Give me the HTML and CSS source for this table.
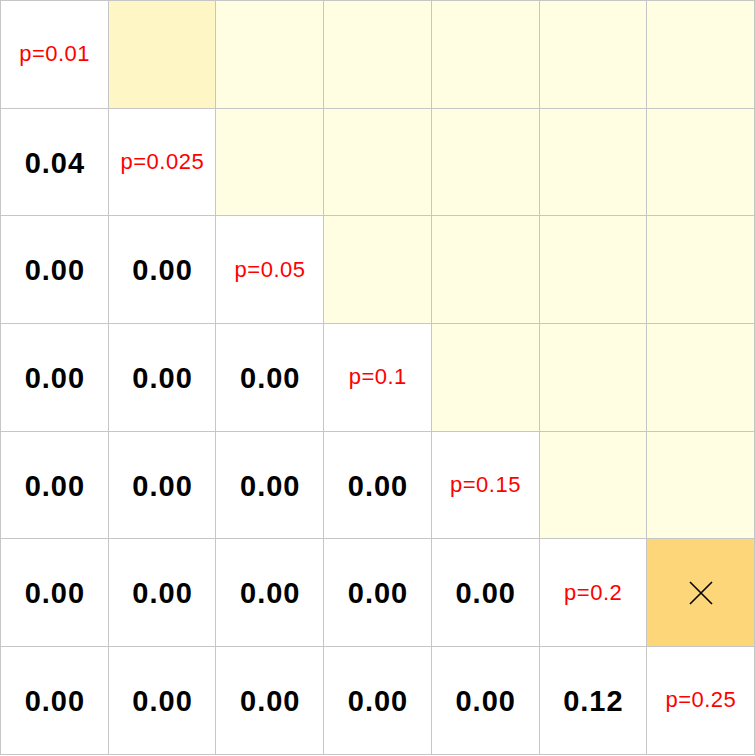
FILE: index.html
```html
<!DOCTYPE html>
<html>
<head>
<meta charset="utf-8">
<link rel="stylesheet" href="styles.css">
</head>
<body>
<div class="matrix">
  <div class="cell diag">p=0.01</div>
  <div class="cell hi"></div>
  <div class="cell pale"></div>
  <div class="cell pale"></div>
  <div class="cell pale"></div>
  <div class="cell pale"></div>
  <div class="cell pale"></div>

  <div class="cell num">0.04</div>
  <div class="cell diag">p=0.025</div>
  <div class="cell pale"></div>
  <div class="cell pale"></div>
  <div class="cell pale"></div>
  <div class="cell pale"></div>
  <div class="cell pale"></div>

  <div class="cell num">0.00</div>
  <div class="cell num">0.00</div>
  <div class="cell diag">p=0.05</div>
  <div class="cell pale"></div>
  <div class="cell pale"></div>
  <div class="cell pale"></div>
  <div class="cell pale"></div>

  <div class="cell num">0.00</div>
  <div class="cell num">0.00</div>
  <div class="cell num">0.00</div>
  <div class="cell diag">p=0.1</div>
  <div class="cell pale"></div>
  <div class="cell pale"></div>
  <div class="cell pale"></div>

  <div class="cell num">0.00</div>
  <div class="cell num">0.00</div>
  <div class="cell num">0.00</div>
  <div class="cell num">0.00</div>
  <div class="cell diag">p=0.15</div>
  <div class="cell pale"></div>
  <div class="cell pale"></div>

  <div class="cell num">0.00</div>
  <div class="cell num">0.00</div>
  <div class="cell num">0.00</div>
  <div class="cell num">0.00</div>
  <div class="cell num">0.00</div>
  <div class="cell diag">p=0.2</div>
  <div class="cell sel"><svg class="x" width="24" height="24" viewBox="0 0 24 24"><path d="M1 1 L23 23 M23 1 L1 23" stroke="#000" stroke-width="1.6" fill="none"/></svg></div>

  <div class="cell num">0.00</div>
  <div class="cell num">0.00</div>
  <div class="cell num">0.00</div>
  <div class="cell num">0.00</div>
  <div class="cell num">0.00</div>
  <div class="cell num">0.12</div>
  <div class="cell diag">p=0.25</div>
</div>
</body>
</html>
```

FILE: styles.css
```css
html, body {
  margin: 0;
  padding: 0;
  background: #fff;
}
.matrix {
  display: grid;
  grid-template-columns: repeat(7, 1fr);
  grid-template-rows: repeat(7, 106.7px);
  gap: 1px;
  padding: 1px;
  width: 755px;
  box-sizing: border-box;
  background: #c6c6c6;
}
.cell {
  background: #fff;
  display: flex;
  align-items: center;
  justify-content: center;
  font-family: "Liberation Sans", Arial, sans-serif;
}
.pale { background: #fffee3; }
.hi { background: #fff6c6; }
.sel { background: #fdd67a; }
.diag {
  color: #ff0000;
  font-size: 22px;
  letter-spacing: 0.5px;
  padding-left: 0.5px;
}
.num {
  font-size: 29px;
  font-weight: bold;
  letter-spacing: 1px;
  padding-top: 2px;
  padding-left: 1px;
  color: #000;
}
.x { display: block; }
```
